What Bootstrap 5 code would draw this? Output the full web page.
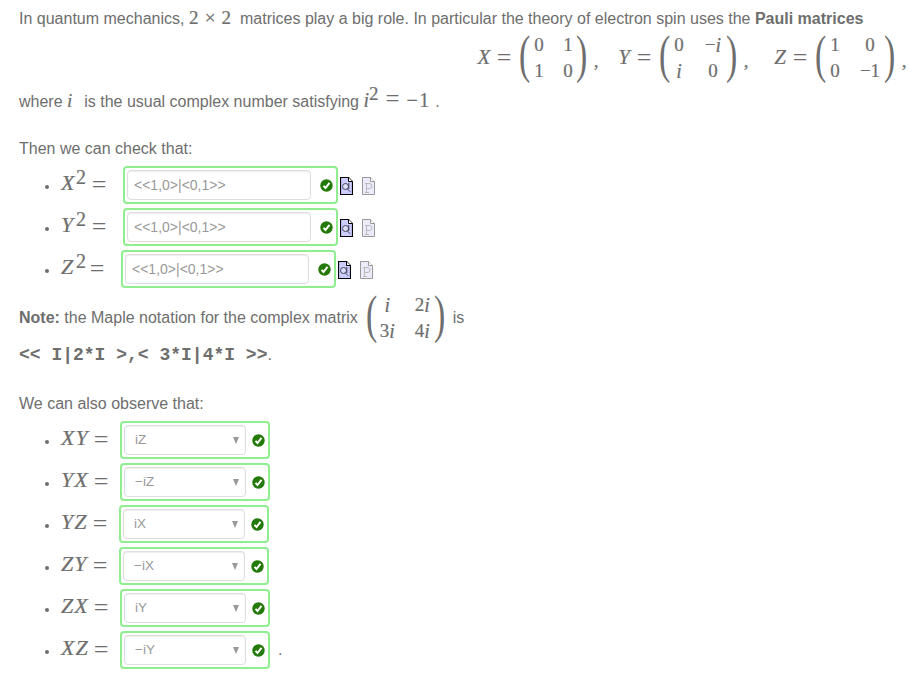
<!DOCTYPE html>
<html lang="en">
<head>
<meta charset="utf-8">
<title>Pauli matrices</title>
<link rel="stylesheet" href="https://cdn.jsdelivr.net/npm/bootstrap@5.3.0/dist/css/bootstrap.min.css">
<style>
body{font:16px/24px "Liberation Sans",Arial,sans-serif;color:#6e6e6e;background:#fff;overflow:hidden}
.question{padding:7px 0 0 19px}
.question p{margin:0;white-space:pre}
.math{font-family:"Liberation Serif","Times New Roman",serif;font-size:19px;line-height:20px;-webkit-text-stroke:.2px}
.math i{font-size:20px}
.intro{height:26px}
.times{word-spacing:1.5px}
.display-math{height:50px;padding-right:15px}
.sym{width:16px;text-align:center;font-size:21px!important;margin-top:-3px}
.eq{width:24px;text-align:center;font-size:26px;-webkit-text-stroke:0}
.fence{width:18px;text-align:center;font-size:52px;line-height:50px;height:50px;-webkit-text-stroke:0;margin-top:-6px}
.fence b{display:inline-block;font-weight:400;transform:scaleX(.65)}
.matrix{display:grid;grid-template-columns:10px 10px;column-gap:19px;grid-auto-rows:26px;line-height:26px;justify-items:center;white-space:nowrap}
.matrix span{display:flex;justify-content:center;width:0}
.matrix.wide{grid-template-columns:10px 20px}
.matrix.wider{grid-template-columns:10px 22px}
.matrix.complex{grid-template-columns:18px 18px;column-gap:17px;margin:0 -1px 0 -2px}
.comma{width:10px;text-align:center;padding-top:6px}
.gap-y{margin-left:15px}.gap-z{margin-left:21px}
.where{height:36px}
.where .first{margin-right:3px}
.where .math sup{font-size:19px;top:-.35em}
.where .rel{display:inline-block;width:28px;text-align:center;font-size:25px;-webkit-text-stroke:0}
.where .neg{font-size:20px;letter-spacing:1.5px}
.check{height:45px;padding-top:18px}
.answers li{height:42px}
.dot{width:4px;height:4px;border-radius:50%;background:#6e6e6e;margin:4px 12px 0 26px}
.lhs{width:62px;height:34px;font-size:22px;line-height:30px;position:relative}
.lhs i{font-size:22px}
.answers .lhs .eq{position:absolute;right:12px;top:2px;width:24px}
.lhs .pw{position:absolute;left:15px;top:-6px;font-size:20px}
.lhs.narrow{width:60px}
.products .lhs{width:59px;letter-spacing:1px}
.products .lhs.narrow{width:58px}
.products .lhs .eq{right:7px;letter-spacing:0;top:2px}
.answer{height:38px;border:2px solid #90ee90;border-radius:4px;padding:2px;width:215px}
.answer .form-control{width:184px;height:30px;border:1px solid #ddd;border-radius:4px;font-size:14px;line-height:18px;padding:5px 6px;color:#999;box-shadow:inset 0 1px 1px #0001;background:#fff}
.answer .tick{margin-left:9px}
.answer.choice{width:150px}
.choice .form-control{width:122px;padding:5px 6px 5px 10px;font-size:13.5px}
.choice .tick{margin-left:6px}
.arrow{width:0;height:0;border:3.5px solid transparent;border-top:7px solid #999;border-bottom:0}
.doc{margin:1px 0 0 2px}.doc+.doc{margin-left:9px}
.note{height:56px}
.code{font:bold 18px/18px "Liberation Mono","Courier New",monospace}
.maple{height:24px;margin-top:-3px!important}
.observe{height:52px;padding-top:25px}
</style>
<script src="https://cdn.jsdelivr.net/npm/bootstrap@5.3.0/dist/js/bootstrap.bundle.min.js"></script>
</head>
<body>
<svg width="0" height="0" class="position-absolute">
<defs>
<symbol id="tick" viewBox="0 0 13 13"><circle cx="6.5" cy="6.5" r="6.2" fill="#247a08"/><path d="M3.5 6.8l2 2.2L9.5 3.9" fill="none" stroke="#fff" stroke-width="2"/></symbol>
<symbol id="preview" viewBox="0 0 13 18"><path d="M.5.5h8l4 4v13H.5z" fill="#ccf" stroke="#000" stroke-width="1.2"/><path d="M8.5.5v4h4" fill="#fff" stroke="#000"/><circle cx="5.5" cy="9.5" r="3" fill="#ddf" stroke="#445"/><path d="M8.8 6v6M7.2 11.8l3 3" fill="none" stroke="#445"/></symbol>
<symbol id="plot" viewBox="0 0 13 18"><path d="M.5.5h8l4 4v13H.5z" fill="#ebebfc" stroke="#999"/><path d="M8.5.5v4h4" fill="#fff" stroke="#999"/><path d="M3 6.5h4q3 0 3 2.5t-3 2.5H5M4.5 6.5v9M3 15.5h4" fill="none" stroke="#bbb"/></symbol>
</defs>
</svg>
<main class="question">
<p class="intro">In quantum mechanics, <span class="math times">2 × 2</span>  matrices play a big role. In particular the theory of electron spin uses the <b>Pauli matrices</b></p>
<div class="display-math math d-flex align-items-center justify-content-end">
<i class="sym">X</i><span class="eq">=</span><span class="fence"><b>(</b></span><div class="matrix"><span>0</span><span>1</span><span>1</span><span>0</span></div><span class="fence"><b>)</b></span><span class="comma">,</span>
<i class="sym gap-y">Y</i><span class="eq">=</span><span class="fence"><b>(</b></span><div class="matrix wide"><span>0</span><span>−<i>i</i></span><span><i>i</i></span><span>0</span></div><span class="fence"><b>)</b></span><span class="comma">,</span>
<i class="sym gap-z">Z</i><span class="eq">=</span><span class="fence"><b>(</b></span><div class="matrix wider"><span>1</span><span>0</span><span>0</span><span>−1</span></div><span class="fence"><b>)</b></span><span class="comma">,</span>
</div>
<div class="where d-flex align-items-center"><p>where <i class="math first">i</i>  is the usual complex number satisfying <span class="math"><i>i</i><sup>2</sup><span class="rel">=</span><span class="neg">−1</span></span> .</p></div>
<p class="check">Then we can check that:</p>
<ul class="answers squares list-unstyled m-0">
<li class="d-flex align-items-center"><span class="dot"></span><span class="lhs math"><i>X</i><span class="pw">2</span><span class="eq">=</span></span><div class="answer d-flex align-items-center"><div class="form-control">&lt;&lt;1,0&gt;|&lt;0,1&gt;&gt;</div><svg class="tick" width="13" height="13"><use href="#tick"/></svg></div><svg class="doc" width="13" height="18"><use href="#preview"/></svg><svg class="doc" width="13" height="18"><use href="#plot"/></svg></li>
<li class="d-flex align-items-center"><span class="dot"></span><span class="lhs math"><i>Y</i><span class="pw">2</span><span class="eq">=</span></span><div class="answer d-flex align-items-center"><div class="form-control">&lt;&lt;1,0&gt;|&lt;0,1&gt;&gt;</div><svg class="tick" width="13" height="13"><use href="#tick"/></svg></div><svg class="doc" width="13" height="18"><use href="#preview"/></svg><svg class="doc" width="13" height="18"><use href="#plot"/></svg></li>
<li class="d-flex align-items-center"><span class="dot"></span><span class="lhs narrow math"><i>Z</i><span class="pw">2</span><span class="eq">=</span></span><div class="answer d-flex align-items-center"><div class="form-control">&lt;&lt;1,0&gt;|&lt;0,1&gt;&gt;</div><svg class="tick" width="13" height="13"><use href="#tick"/></svg></div><svg class="doc" width="13" height="18"><use href="#preview"/></svg><svg class="doc" width="13" height="18"><use href="#plot"/></svg></li>
</ul>
<div class="note d-flex align-items-center"><p><b>Note:</b> the Maple notation for the complex matrix </p><div class="math d-flex align-items-center"><span class="fence"><b>(</b></span><div class="matrix complex"><span><i>i</i></span><span>2<i>i</i></span><span>3<i>i</i></span><span>4<i>i</i></span></div><span class="fence"><b>)</b></span></div><p> is</p></div>
<p class="maple d-flex align-items-center"><span class="code">&lt;&lt; I|2*I &gt;,&lt; 3*I|4*I &gt;&gt;</span>.</p>
<p class="observe">We can also observe that:</p>
<ul class="answers products list-unstyled m-0">
<li class="d-flex align-items-center"><span class="dot"></span><span class="lhs math"><i>XY</i><span class="eq">=</span></span><div class="answer choice d-flex align-items-center"><div class="form-control d-flex align-items-center justify-content-between">iZ<span class="arrow"></span></div><svg class="tick" width="13" height="13"><use href="#tick"/></svg></div></li>
<li class="d-flex align-items-center"><span class="dot"></span><span class="lhs math"><i>YX</i><span class="eq">=</span></span><div class="answer choice d-flex align-items-center"><div class="form-control d-flex align-items-center justify-content-between">−iZ<span class="arrow"></span></div><svg class="tick" width="13" height="13"><use href="#tick"/></svg></div></li>
<li class="d-flex align-items-center"><span class="dot"></span><span class="lhs narrow math"><i>YZ</i><span class="eq">=</span></span><div class="answer choice d-flex align-items-center"><div class="form-control d-flex align-items-center justify-content-between">iX<span class="arrow"></span></div><svg class="tick" width="13" height="13"><use href="#tick"/></svg></div></li>
<li class="d-flex align-items-center"><span class="dot"></span><span class="lhs narrow math"><i>ZY</i><span class="eq">=</span></span><div class="answer choice d-flex align-items-center"><div class="form-control d-flex align-items-center justify-content-between">−iX<span class="arrow"></span></div><svg class="tick" width="13" height="13"><use href="#tick"/></svg></div></li>
<li class="d-flex align-items-center"><span class="dot"></span><span class="lhs math"><i>ZX</i><span class="eq">=</span></span><div class="answer choice d-flex align-items-center"><div class="form-control d-flex align-items-center justify-content-between">iY<span class="arrow"></span></div><svg class="tick" width="13" height="13"><use href="#tick"/></svg></div></li>
<li class="d-flex align-items-center"><span class="dot"></span><span class="lhs math"><i>XZ</i><span class="eq">=</span></span><div class="answer choice d-flex align-items-center"><div class="form-control d-flex align-items-center justify-content-between">−iY<span class="arrow"></span></div><svg class="tick" width="13" height="13"><use href="#tick"/></svg></div><span class="ps-2">.</span></li>
</ul>
</main>
</body>
</html>
